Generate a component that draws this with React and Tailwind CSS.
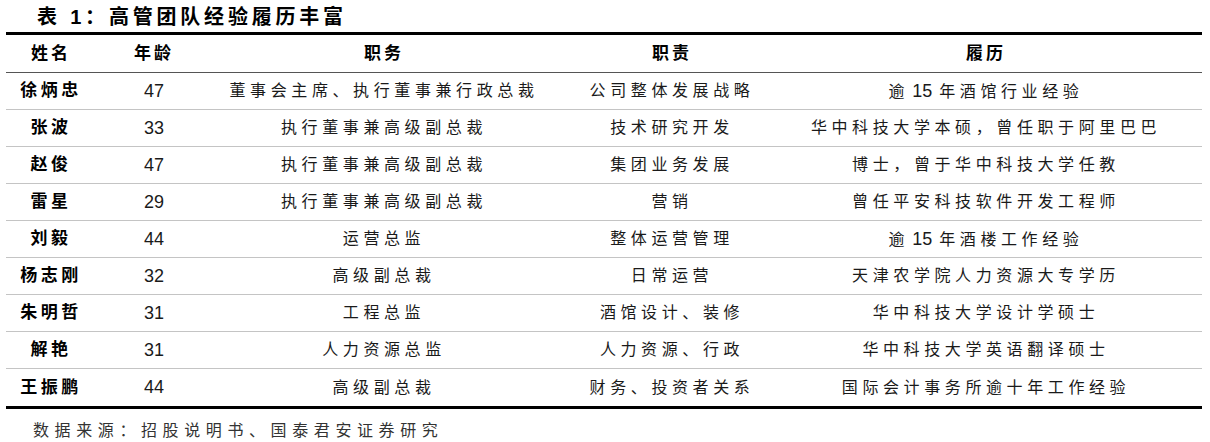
import React from "react";

const rows = [
  ["徐炳忠", "47", "董事会主席、执行董事兼行政总裁", "公司整体发展战略", ["逾", "15", "年酒馆行业经验"]],
  ["张波", "33", "执行董事兼高级副总裁", "技术研究开发", "华中科技大学本硕，曾任职于阿里巴巴"],
  ["赵俊", "47", "执行董事兼高级副总裁", "集团业务发展", "博士，曾于华中科技大学任教"],
  ["雷星", "29", "执行董事兼高级副总裁", "营销", "曾任平安科技软件开发工程师"],
  ["刘毅", "44", "运营总监", "整体运营管理", ["逾", "15", "年酒楼工作经验"]],
  ["杨志刚", "32", "高级副总裁", "日常运营", "天津农学院人力资源大专学历"],
  ["朱明哲", "31", "工程总监", "酒馆设计、装修", "华中科技大学设计学硕士"],
  ["解艳", "31", "人力资源总监", "人力资源、行政", "华中科技大学英语翻译硕士"],
  ["王振鹏", "44", "高级副总裁", "财务、投资者关系", "国际会计事务所逾十年工作经验"],
];

const font = { fontFamily: '"Liberation Sans", "Noto Sans CJK SC", sans-serif' };

function Cell({ children, className = "" }) {
  return <div className={`flex items-center justify-center ${className}`}>{children}</div>;
}

function Text({ value }) {
  if (Array.isArray(value)) {
    return (
      <span className="tracking-[4.6px]">
        {value[0]}
        <span className="text-[18px] tracking-normal ml-[3px] mr-[7px]">{value[1]}</span>
        {value[2]}
      </span>
    );
  }
  return <span className="tracking-[4.6px]">{value}</span>;
}

export default function App() {
  return (
    <div className="w-[1210px] h-[442px] bg-white text-[#1a1a1a] overflow-hidden" style={font}>
      <div className="h-[32px] flex items-center pl-[37px] pt-[1px] text-[20px] font-bold tracking-[3.8px] text-black">
        表 1：高管团队经验履历丰富
      </div>

      <div className="mx-[6px] w-[1196px] border-t-[3px] border-b-[3px] border-black">
        {/* header */}
        <div className="flex h-[38px] border-b border-[#555] font-bold text-[17px] text-black">
          <Cell className="w-[90px] tracking-[3px]">姓名</Cell>
          <Cell className="w-[116px] tracking-[3px]">年龄</Cell>
          <Cell className="w-[344px] tracking-[3px]">职务</Cell>
          <Cell className="w-[232px] tracking-[3px]">职责</Cell>
          <Cell className="flex-1 pr-[18px] tracking-[3px]">履历</Cell>
        </div>

        {rows.map((r, i) => (
          <div
            key={r[0]}
            className={`flex h-[37px] text-[16px] ${i < rows.length - 1 ? "border-b border-[#c4c4c4]" : ""}`}
          >
            <Cell className="w-[90px] font-bold text-[17px] text-black tracking-[3.5px]">{r[0]}</Cell>
            <Cell className="w-[116px] text-[18px]">{r[1]}</Cell>
            <Cell className="w-[344px]"><Text value={r[2]} /></Cell>
            <Cell className="w-[232px]"><Text value={r[3]} /></Cell>
            <Cell className="flex-1 pr-[18px]"><Text value={r[4]} /></Cell>
          </div>
        ))}
      </div>

      <div className="pl-[33px] pt-[12px] text-[16px] leading-[20px] tracking-[5.6px] text-[#333]">
        数据来源：招股说明书、国泰君安证券研究
      </div>
    </div>
  );
}
